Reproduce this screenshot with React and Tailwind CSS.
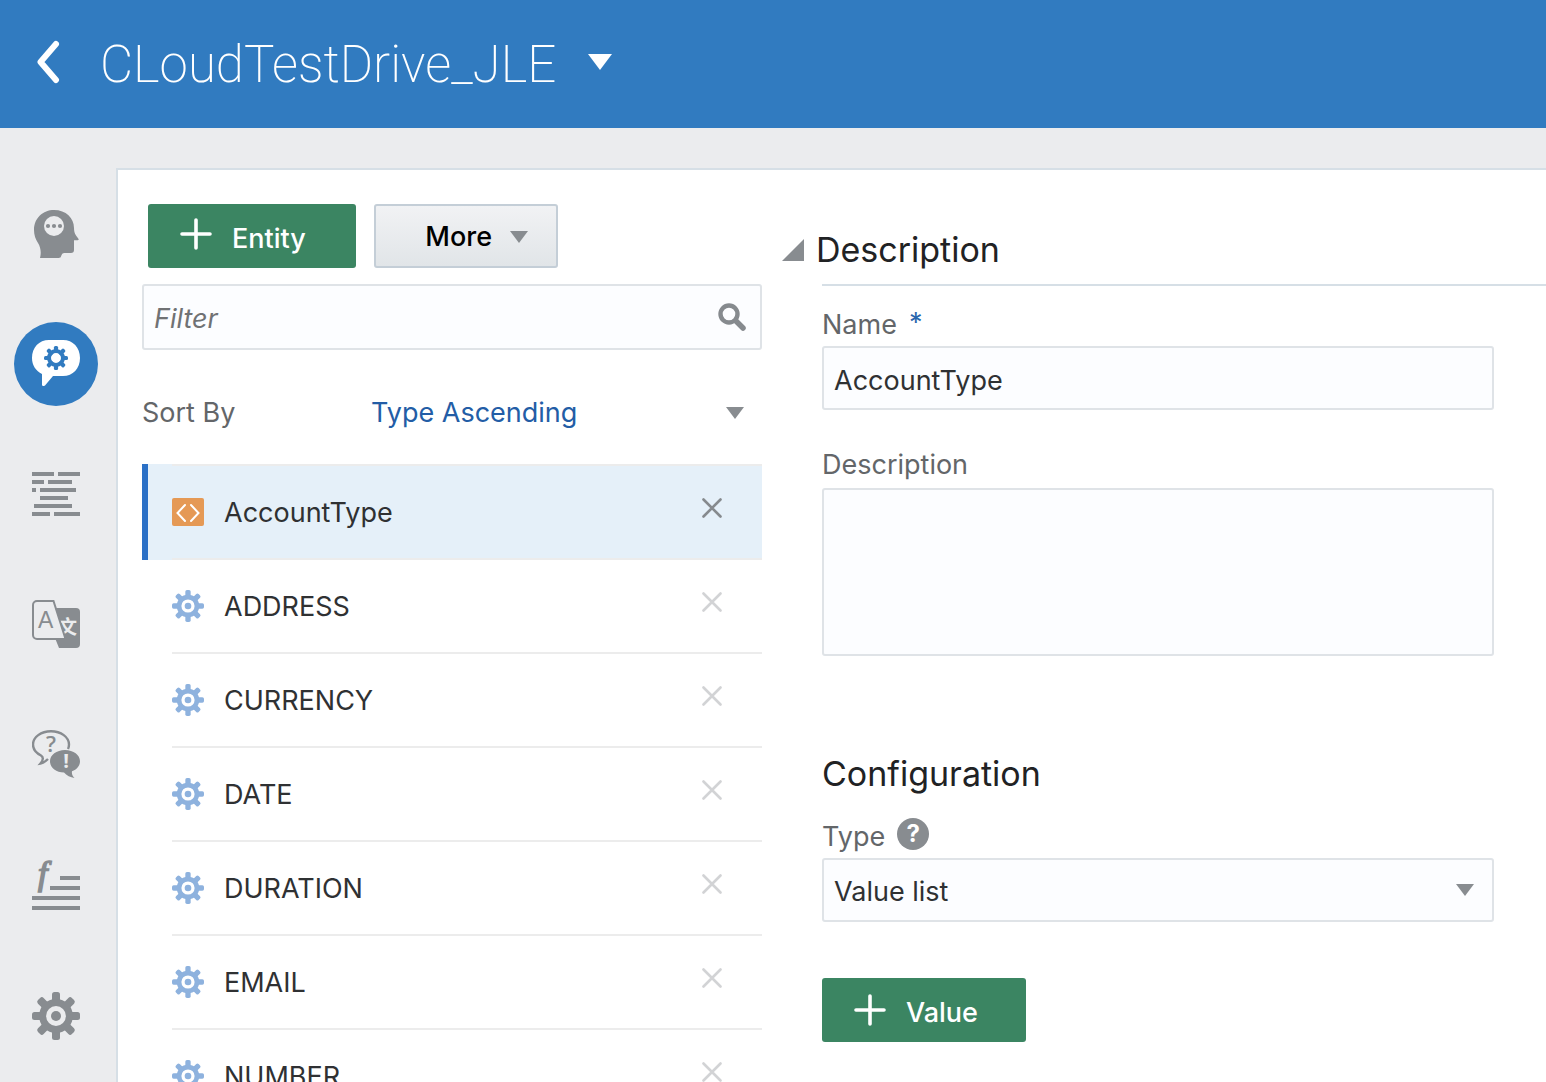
import React from "react";

const ENTITIES = ["ADDRESS", "CURRENCY", "DATE", "DURATION", "EMAIL", "NUMBER"];
const TEETH = [0, 45, 90, 135, 180, 225, 270, 315];

function Gear({ className }) {
  return (
    <svg viewBox="0 0 48 48" className={className} aria-hidden="true">
      <g fill="currentColor">
        {TEETH.map((a) => (
          <rect key={a} x="20" y="0" width="8" height="13" rx="2.500" transform={`rotate(${a} 24 24)`} />
        ))}
        <circle cx="24" cy="24" r="5" />
      </g>
      <circle cx="24" cy="24" r="13.4" fill="none" stroke="currentColor" strokeWidth="7" />
    </svg>
  );
}

function HeadIcon() {
  return (
    <svg viewBox="0 0 48 48" className="size-12" aria-hidden="true">
      <path
        fill="currentColor"
        d="M8 48C9.5 42 8.500 37 6 33C3.500 29 2 25 2 20C2 8 11 0 22 0C34 0 42 8 42 18C42 21 42.500 23 44 25.500L46.600 29Q47 30 45.500 30.200L42 30.300V40Q42 43 39 43H32Q29.800 43 29.400 45.500Q29 48 26.500 48Z"
      />
      <circle cx="22" cy="16" r="10" fill="#ebecee" />
      <g fill="currentColor">
        <circle cx="16" cy="16" r="2.1" />
        <circle cx="22" cy="16" r="2.1" />
        <circle cx="28" cy="16" r="2.1" />
      </g>
    </svg>
  );
}

function EntityIcon() {
  return (
    <svg viewBox="0 0 84 84" className="size-21" aria-hidden="true">
      <path
        fill="#fff"
        d="M35 18H49C59 18 66 25.500 66 36C66 46.500 59 54 49 54H39L31 63.500Q28 65 28 62.500V52C22 49 18 43.500 18 36C18 25.500 25 18 35 18Z"
      />
      <g fill="#317bc0">
        {TEETH.map((a) => (
          <rect key={a} x="39.9" y="24" width="4.200" height="7" rx="1.500" transform={`rotate(${a} 42 36)`} />
        ))}
      </g>
      <circle cx="42" cy="36" r="7" fill="none" stroke="#317bc0" strokeWidth="4" />
    </svg>
  );
}

function FlowIcon() {
  const bars = [
    [0, 2, 22], [26, 2, 22], [0, 10, 12], [16, 10, 24], [0, 18, 4], [8, 18, 36],
    [8, 26, 28], [2, 34, 38], [0, 42, 18], [22, 42, 26],
  ];
  return (
    <svg viewBox="0 0 48 48" className="size-12" fill="currentColor" aria-hidden="true">
      {bars.map(([x, y, w]) => (
        <rect key={`${x}-${y}`} x={x} y={y} width={w} height="4" />
      ))}
    </svg>
  );
}

function TranslateIcon() {
  return (
    <svg viewBox="0 0 48 48" className="size-12" aria-hidden="true">
      <path fill="currentColor" d="M20 8H44a4 4 0 0 1 4 4V44a4 4 0 0 1-4 4H27L23 38Z" />
      <text x="26" y="34" fontSize="19" fontWeight="700" fill="#ebecee" className="font-['Noto_Sans_CJK_SC',sans-serif]">文</text>
      <path fill="#ebecee" stroke="currentColor" strokeWidth="2" d="M5 1H21.500L33.500 39H5a4 4 0 0 1-4-4V5a4 4 0 0 1 4-4Z" />
      <text x="6" y="28" fontSize="23" fill="currentColor" className="font-['Liberation_Sans',sans-serif]">A</text>
    </svg>
  );
}

function QnaIcon() {
  return (
    <svg viewBox="0 0 48 48" className="size-12" aria-hidden="true">
      <path
        fill="none"
        stroke="currentColor"
        strokeWidth="2.400"
        d="M36 19C36.700 17.500 37 16 37 14.500C37 7.200 29 1.200 19 1.200S1 7.200 1 14.500C1 19 4 23 9 25.500C11.500 27 11.500 30 8.500 33.500C11.500 33 13.500 31.500 16 29"
      />
      <path
        fill="currentColor"
        d="M33 20C41.500 20 48 25 48 31.200C48 35.500 45 39.500 40 41.200C39.500 44 40.500 46 42.500 48C38.500 47.500 34.500 45.500 32 42.500C24 42.500 18 37.500 18 31.200C18 25 24.500 20 33 20Z"
      />
      <text x="19" y="22" fontSize="22" fontWeight="600" textAnchor="middle" fill="currentColor" className="font-['Open_Sans',sans-serif]">?</text>
      <text x="34" y="38" fontSize="20" fontWeight="700" textAnchor="middle" fill="#ebecee" className="font-['Open_Sans',sans-serif]">!</text>
    </svg>
  );
}

function FunctionIcon() {
  return (
    <svg viewBox="0 0 48 48" className="size-12 overflow-visible" fill="currentColor" aria-hidden="true">
      <text x="6" y="25" fontSize="34" fontStyle="italic" stroke="currentColor" strokeWidth="1.600" className="font-['Liberation_Serif',serif]">f</text>
      <rect x="28" y="16" width="20" height="4" />
      <rect x="18" y="26" width="30" height="4" />
      <rect x="0" y="36" width="48" height="4" />
      <rect x="0" y="46" width="48" height="4" />
    </svg>
  );
}

function Triangle({ className }) {
  return (
    <svg viewBox="0 0 18 12" preserveAspectRatio="none" className={className} fill="currentColor" aria-hidden="true">
      <path d="M0 0H18L9 12Z" />
    </svg>
  );
}

function PlusIcon({ className }) {
  return (
    <svg viewBox="0 0 32 32" className={`size-8 ${className}`} stroke="currentColor" strokeWidth="3.600" strokeLinecap="round" aria-hidden="true">
      <path d="M16 2V30M2 16H30" />
    </svg>
  );
}

function AddButton({ children, className, iconClass = "" }) {
  return (
    <button type="button" className={`flex h-16 items-center gap-5 rounded-[3px] bg-[#3b8562] pl-8 text-white ${className}`}>
      <PlusIcon className={iconClass} />
      <span className="pt-1.5 font-medium">{children}</span>
    </button>
  );
}

function EntityRow({ name, selected }) {
  return (
    <li className={selected ? "border-l-6 border-[#2b70c6] bg-[#e5f0f9] pl-6" : "pl-[30px]"}>
      <div className={`flex items-center border-b-2 border-[#ececec] ${selected ? "h-24 border-t-2" : "h-[94px]"}`}>
        {selected ? (
          <svg viewBox="0 0 32 28" className="h-7 w-8" aria-hidden="true">
            <rect width="32" height="28" rx="2" fill="#e59955" />
            <path d="M13 7L5.500 15L13 23M19 7L26.500 15L19 23" fill="none" stroke="#fff" strokeWidth="2" strokeLinecap="round" />
          </svg>
        ) : (
          <Gear className="size-8 text-[#8eb2de]" />
        )}
        <button type="button" className="ml-5 flex-1 pt-0.5 text-left">{name}</button>
        <button type="button" aria-label={`Delete ${name}`} className={`mr-10 mb-2 ${selected ? "text-[#868a8e]" : "text-[#d2d3d5]"}`}>
          <svg viewBox="0 0 20 20" className="size-5" stroke="currentColor" strokeWidth="2.600" strokeLinecap="round" aria-hidden="true">
            <path d="M1.500 1.500L18.500 18.500M18.500 1.500L1.500 18.500" />
          </svg>
        </button>
      </div>
    </li>
  );
}

const field = "w-full rounded-[3px] border-2 border-[#dfe3e7] bg-[#fcfdff] pl-2.5 text-[#2f3133] outline-none";
const fieldLabel = "flex h-11 items-center pt-0.5 text-[#636669]";
const navItem = "flex size-21 items-center justify-center rounded-full";

export default function App() {
  return (
    <div className="flex h-screen flex-col overflow-hidden bg-[#ebecee] font-['Inter',sans-serif] text-[27px] leading-10 text-[#2f3133]">
      <header className="flex h-32 shrink-0 items-center bg-[#317bc0] pl-9 text-white">
        <button type="button" aria-label="Back" className="mb-1">
          <svg viewBox="0 0 26 44" className="h-11 w-6.5" fill="none" stroke="currentColor" strokeWidth="6" strokeLinecap="round" strokeLinejoin="round" aria-hidden="true">
            <path d="M20 4L4.500 22L20 40" />
          </svg>
        </button>
        <h1 className="ml-[38px] pt-0.5 font-['Roboto',sans-serif] text-[51px] leading-16 font-extralight">CLoudTestDrive_JLE</h1>
        <button type="button" aria-label="Switch bot" className="mb-1 ml-8">
          <Triangle className="h-4 w-6" />
        </button>
      </header>

      <div className="flex min-h-0 flex-1">
        <nav className="w-[116px] shrink-0 pt-16 pl-3.5 text-[#888c90]">
          <ul className="flex flex-col gap-[46px]">
            <li><a href="#intents" aria-label="Intents" className={navItem}><HeadIcon /></a></li>
            <li><a href="#entities" aria-label="Entities" className={`${navItem} bg-[#317bc0]`}><EntityIcon /></a></li>
            <li><a href="#flows" aria-label="Flows" className={navItem}><FlowIcon /></a></li>
            <li><a href="#translate" aria-label="Resources" className={navItem}><TranslateIcon /></a></li>
            <li><a href="#qna" aria-label="Questions" className={navItem}><QnaIcon /></a></li>
            <li><a href="#components" aria-label="Components" className={navItem}><FunctionIcon /></a></li>
            <li><a href="#settings" aria-label="Settings" className={`${navItem} pt-1`}><Gear className="size-12" /></a></li>
          </ul>
        </nav>

        <main className="mt-10 flex min-w-0 flex-1 border-t-2 border-l-2 border-[#d6dfe6] bg-white">
          <section aria-label="Entities" className="w-[644px] shrink-0 pt-[34px] pl-6">
            <div className="flex gap-[18px] pl-1.5">
              <AddButton className="w-52" iconClass="mb-1">Entity</AddButton>
              <button type="button" className="flex h-16 w-46 items-center justify-end gap-[18px] rounded-[3px] border-2 border-[#c4ced7] bg-linear-to-b from-[#f1f2f4] to-[#e1e5e8] pt-0.5 pr-7 font-medium text-black">
                More
                <Triangle className="h-3 w-4.5 text-[#888c90]" />
              </button>
            </div>

            <div className="mt-4 flex h-[66px] items-center rounded-[3px] border-2 border-[#dfe3e7] bg-[#fcfdff] pr-3.5 pl-2.5">
              <input type="text" aria-label="Filter" placeholder="Filter" className="min-w-0 flex-1 bg-transparent pt-1 outline-none placeholder:text-[#707274] placeholder:italic" />
              <svg viewBox="0 0 28 28" className="size-7" fill="none" stroke="#868a8e" strokeLinecap="round" aria-hidden="true">
                <circle cx="11" cy="11" r="8.500" strokeWidth="4.400" />
                <path d="M18 18L25 25" strokeWidth="5.500" />
              </svg>
            </div>

            <div className="mt-[43px] mb-[31px] flex h-10 items-center">
              <label htmlFor="sort" className="w-[229px] text-[#636669]">Sort By</label>
              <div className="relative flex flex-1 items-center">
                <select id="sort" className="w-full appearance-none bg-transparent text-[#235da6] outline-none">
                  <option>Type Ascending</option>
                </select>
                <Triangle className="pointer-events-none absolute right-4.5 h-3 w-4.5 text-[#888c90]" />
              </div>
            </div>

            <ul>
              <EntityRow name="AccountType" selected />
              {ENTITIES.map((n) => (
                <EntityRow key={n} name={n} />
              ))}
            </ul>
          </section>

          <section aria-label="Entity details" className="min-w-0 flex-1 pt-[50px] pl-5">
            <div className="mb-1 flex h-15 items-center">
              <button type="button" aria-label="Collapse description" className="text-[#888c90]">
                <svg viewBox="0 0 22 22" className="size-5.5" fill="currentColor" aria-hidden="true"><path d="M22 0V22H0Z" /></svg>
              </button>
              <h2 className="ml-3 text-[34px] text-[#212224]">Description</h2>
            </div>

            <form className="ml-10 border-t-2 border-[#d6dfe6] pt-4 pr-[52px]">
              <label htmlFor="name" className={fieldLabel}>
                Name <span className="mb-1 ml-3 text-[#2a66ad]">*</span>
              </label>
              <input id="name" type="text" defaultValue="AccountType" className={`${field} block h-16 pt-1`} />

              <label htmlFor="description" className={`${fieldLabel} mt-8 mb-0.5`}>Description</label>
              <textarea id="description" className={`${field} block h-42 resize-none`} />

              <h2 className="mt-[94px] mb-4 flex h-12 items-center text-[34px] text-[#212224]">Configuration</h2>
              <div className="flex h-11 items-center">
                <label htmlFor="type" className={fieldLabel}>Type</label>
                <button type="button" aria-label="Help" className="mb-1 ml-3 flex size-8 items-center justify-center rounded-full bg-[#888c90] text-[24px] font-bold text-white">?</button>
              </div>
              <div className="relative flex items-center">
                <select id="type" className={`${field} h-16 appearance-none pt-1`}>
                  <option>Value list</option>
                </select>
                <Triangle className="pointer-events-none absolute right-5 h-3 w-4.5 text-[#888c90]" />
              </div>

              <AddButton className="mt-14 w-51">Value</AddButton>
            </form>
          </section>
        </main>
      </div>
    </div>
  );
}
